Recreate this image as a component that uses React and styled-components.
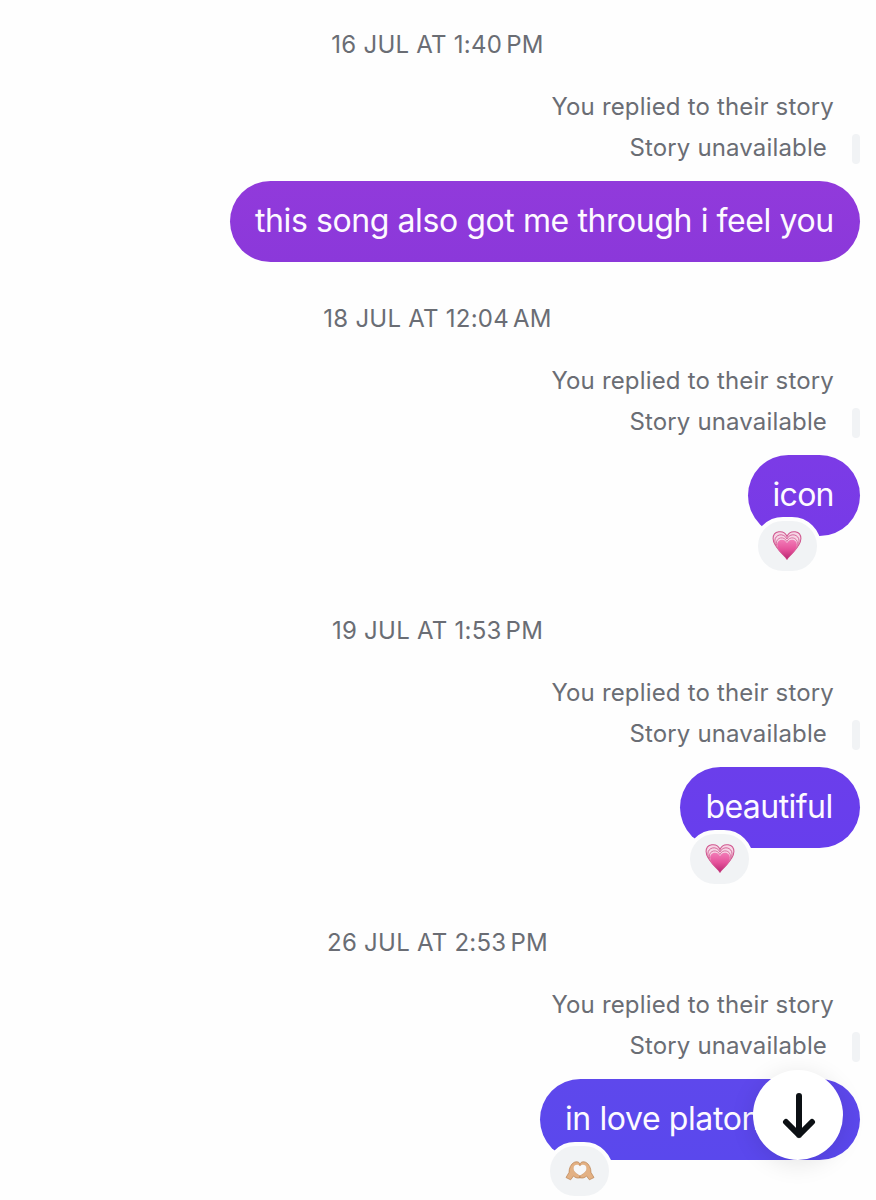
import React from "react";
import styled, { createGlobalStyle } from "styled-components";

const GlobalStyle = createGlobalStyle`
  * { box-sizing: border-box; }
  html, body { margin: 0; background: #fefefe; }
  body { height: 1200px; overflow: hidden; font-family: Inter, "Liberation Sans", sans-serif; }
`;

const Thread = styled.main`
  position: relative;
  width: 876px;
  height: 1200px;
  padding: 24px 16px 0 0;
  overflow: hidden;
  display: flex;
  flex-direction: column;
`;

const Entry = styled.section`
  flex: none;
  display: flex;
  flex-direction: column;
  align-items: flex-end;
  height: ${(p) => p.$height}px;
`;

const Stamp = styled.time`
  width: 100%;
  height: 40px;
  padding-left: 15px;
  text-align: center;
  font-size: 24px;
  line-height: 41px;
  letter-spacing: 0.25px;
  color: #6a6d74;
  white-space: nowrap;
`;

const ThinGap = styled.span`
  display: inline-block;
  width: 4px;
`;

const Context = styled.p`
  margin: 23px 26px 0 0;
  height: 40px;
  font-size: 24px;
  line-height: 40px;
  letter-spacing: 0.17px;
  color: #6a6d74;
  white-space: nowrap;
`;

const Unavailable = styled.div`
  display: flex;
  align-items: center;
  height: 30px;
  margin-top: 7px;
  gap: 25px;
  font-size: 24px;
  line-height: 30px;
  letter-spacing: 0.15px;
  color: #6a6d74;
  white-space: nowrap;
`;

const QuoteText = styled.span`
  padding-bottom: 2px;
`;

const QuoteBar = styled.span`
  width: 8px;
  height: 30px;
  border-radius: 4px;
  background: #f1f3f5;
`;

const Bubble = styled.div`
  position: relative;
  height: 81px;
  width: ${(p) => p.$width}px;
  margin-top: 17px;
  padding-left: 25px;
  border-radius: 41px;
  background: linear-gradient(${(p) => p.$from}, ${(p) => p.$to});
  color: #fdfaff;
  font-size: 32px;
  line-height: 79px;
  letter-spacing: ${(p) => p.$spacing}px;
  white-space: nowrap;
`;

const Reaction = styled.span`
  position: absolute;
  left: 6px;
  top: 62.5px;
  width: 67px;
  height: 58px;
  border: 4px solid #fefefe;
  border-radius: 30px;
  background: #f1f3f5;
  display: flex;
  align-items: center;
  justify-content: center;
`;

const ScrollButton = styled.button`
  position: absolute;
  left: 753px;
  top: 1070px;
  width: 90px;
  height: 90px;
  padding: 0 0 1px 1px;
  border: 0;
  border-radius: 50%;
  background: #fff;
  box-shadow: 0 4px 24px rgba(0, 0, 0, 0.1);
  display: flex;
  align-items: center;
  justify-content: center;
`;

const heart = "M15 29 C12 24 3 18 3 10 C3 3 12 1 15 8 C18 1 27 3 27 10 C27 18 18 24 15 29Z";

const GrowingHeart = () => (
  <svg width="30" height="30" viewBox="0 0 30 30" aria-label="growing heart">
    <defs>
      <linearGradient id="pink" x1="0" y1="0" x2="0" y2="1">
        <stop offset="0" stopColor="#f27db8" />
        <stop offset="0.5" stopColor="#e5529b" />
        <stop offset="1" stopColor="#b92671" />
      </linearGradient>
    </defs>
    <g fill="#f6d5e5" stroke="#d0578f" strokeWidth="0.9">
      <path d={heart} transform="translate(-2.4 -3.2) scale(1.16 1.08)" />
      <path d={heart} transform="translate(-0.2 0.3) scale(1.01 .96)" />
      <path d={heart} transform="translate(1.7 3.8) scale(.88 .84)" />
    </g>
    <path d={heart} fill="url(#pink)" transform="translate(2.7 5.8) scale(.82 .78)" />
  </svg>
);

const HeartHands = () => (
  <svg width="30" height="20" viewBox="0 0 30 20" aria-label="heart hands">
    <g fill="#e3b184" stroke="#b9804f" strokeWidth=".7" strokeLinejoin="round">
      <path d="M1 16.5 L4 11.5 C4 7 6 3 9 1.4 C12 0 15 1 15 4 L14.8 5.6 C12 3.2 8.5 4.6 9 8.4 C9.4 11.3 13 13.2 15 14.6 L15 16.8 C12 17.6 10 16.4 8.5 15 L5.6 18.8Z" />
      <path d="M29 16.5 L26 11.5 C26 7 24 3 21 1.4 C18 0 15 1 15 4 L15.2 5.6 C18 3.2 21.5 4.6 21 8.4 C20.6 11.3 17 13.2 15 14.6 L15 16.8 C18 17.6 20 16.4 21.5 15 L24.4 18.8Z" />
    </g>
    <path d="M15 14.6 C12.6 13 8.8 11.2 8.5 7.8 C8.2 4 12.4 2.6 15 5.2 C17.6 2.6 21.8 4 21.5 7.8 C21.2 11.2 17.4 13 15 14.6Z" fill="#f7f8fa" />
  </svg>
);

const DownArrow = () => (
  <svg width="36" height="48" viewBox="0 0 36 48" fill="none" stroke="#0c1014" strokeWidth="6" strokeLinecap="round" strokeLinejoin="round">
    <path d="M18 5v39M5 31l13 13 13-13" />
  </svg>
);

const entries = [
  { height: 273.5, date: "16 JUL AT 1:40", half: "PM", text: "this song also got me through i feel you", spacing: -0.41, width: 630, from: "#913adb", to: "#8b38da" },
  { height: 312.5, date: "18 JUL AT 12:04", half: "AM", text: "icon", spacing: -0.7, width: 112.5, from: "#7c3be6", to: "#773ae7", mark: GrowingHeart },
  { height: 312, date: "19 JUL AT 1:53", half: "PM", text: "beautiful", spacing: -0.55, width: 179.6, from: "#6b3eeb", to: "#673eed", mark: GrowingHeart },
  { height: 278, date: "26 JUL AT 2:53", half: "PM", text: "in love platonically", spacing: -0.4, width: 320, from: "#5e48ec", to: "#5a48ed", mark: HeartHands },
];

export default function App() {
  return (
    <>
      <GlobalStyle />
      <Thread>
        {entries.map(({ mark: Mark, ...e }) => (
          <Entry key={e.date} $height={e.height}>
            <Stamp>{e.date}<ThinGap />{e.half}</Stamp>
            <Context>You replied to their story</Context>
            <Unavailable><QuoteText>Story unavailable</QuoteText><QuoteBar /></Unavailable>
            <Bubble $width={e.width} $spacing={e.spacing} $from={e.from} $to={e.to}>
              {e.text}
              {Mark && <Reaction><Mark /></Reaction>}
            </Bubble>
          </Entry>
        ))}
        <ScrollButton aria-label="Scroll to latest"><DownArrow /></ScrollButton>
      </Thread>
    </>
  );
}
